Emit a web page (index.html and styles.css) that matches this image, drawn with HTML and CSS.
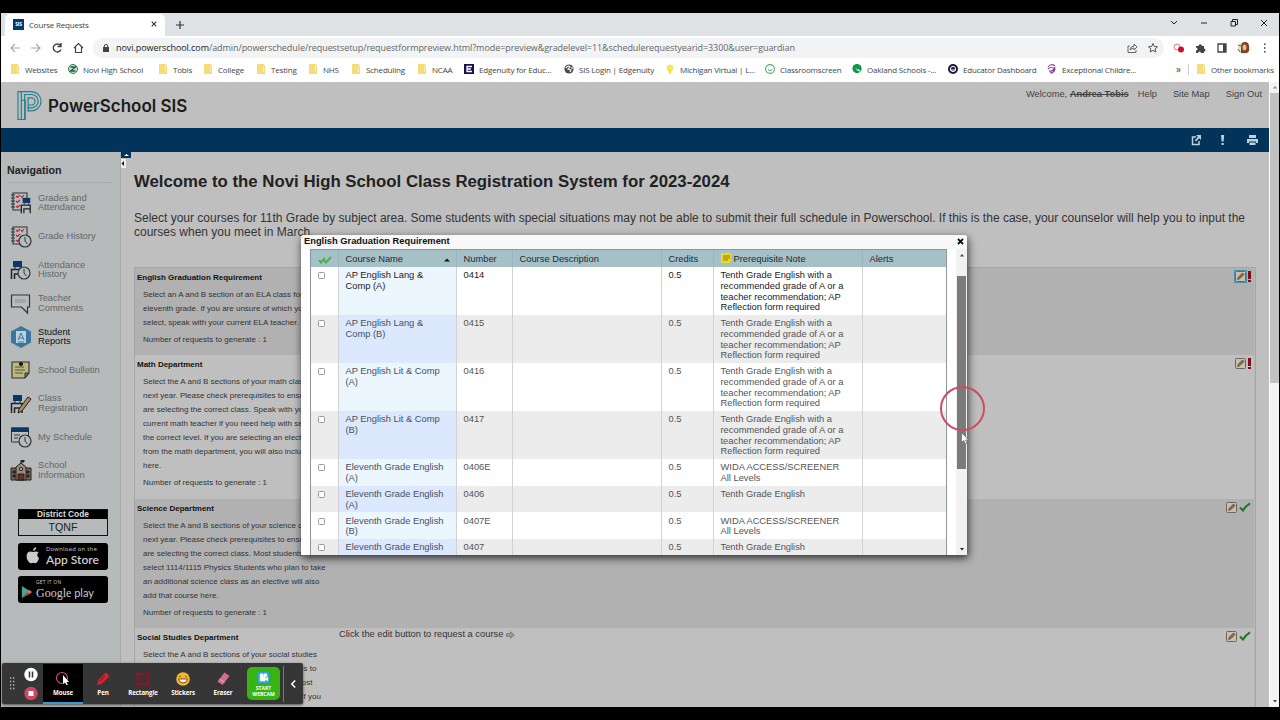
FILE: index.html
```html
<!DOCTYPE html>
<html lang="en">
  <head>
    <meta charset="UTF-8" />
    <meta name="viewport" content="width=device-width, initial-scale=1.0" />
    <title>Course Requests</title>
    <link rel="stylesheet" href="styles.css">
  </head>
  <body>
    <svg class="defs" width="0" height="0">
      <symbol id="folder" viewBox="0 0 10 10">
        <path d="M1 0h7v1l1 1v8H1z" fill="#f6dc78" />
        <path d="M7.5 2v6" stroke="#fcedb0" />
      </symbol>
      <symbol id="edit" viewBox="0 0 11 11">
        <rect x=".5" y=".5" width="10" height="10" rx="1" fill="#c9bfae" stroke="#6e675e" />
        <path d="M2.5 8.5l1-2.5 4-4 1.5 1.5-4 4z" fill="#8a7040" stroke="#4e4433" stroke-width=".7" />
      </symbol>
      <symbol id="check" viewBox="0 0 12 10">
        <path d="M1 5.5l3 3Q6.500 4 11 1.300" fill="none" stroke="#1d7a24" stroke-width="2.100" />
      </symbol>
      <symbol id="clock" viewBox="0 0 14 14">
        <circle cx="7" cy="7" r="6" fill="#b8bcbe" stroke="#333" stroke-width="1.200" />
        <path d="M7 3v4l2.500 3" fill="none" stroke="#333" />
      </symbol>
      <symbol id="notebook" viewBox="0 0 20 20">
        <path d="M3 1h14v17H3z" fill="#b8bcbe" stroke="#333" stroke-width="1.100" />
        <path d="M1 3h4M1 6h4M1 9h4M1 12h4M1 15h4" stroke="#333" />
        <path d="M6 4l1.500 1.500L10 3M6 9l1.500 1.500L10 8M6 14l1.500 1.500L10 13M11 4l1 1.500L14 3" fill="none" stroke="#b3263a" stroke-width="1.100" />
      </symbol>
      <symbol id="chair" viewBox="0 0 14 20">
        <path d="M3 1h9v6H3z" fill="#0b3768" />
        <path d="M5 6v3M10 6v3" stroke="#0b3768" />
        <path d="M1.500 19V9.500H12V19M4.500 19v-5h7" fill="none" stroke="#222" stroke-width="1.500" />
      </symbol>
    </svg>

    <div class="browser">
      <div class="tabs">
        <div class="tab">
          <span class="tab-icon">SIS</span>
          <span class="tab-title">Course Requests</span>
          <svg class="tab-close" viewBox="0 0 6 6"><path d="M.7.7l4.600 4.600M5.300.7L.7 5.300" stroke="#333" stroke-width="1.100" /></svg>
        </div>
        <svg class="new-tab" viewBox="0 0 8 8"><path d="M4 0v8M0 4h8" stroke="#333" stroke-width="1.200" /></svg>
        <svg class="window-buttons" viewBox="0 0 98 10" fill="none" stroke="#222">
          <path d="M1 3L4 6 7 3M31 5h6" />
          <path d="M61 3.500h4.500v4.500H61zM62.500 3V1.500h5v5H66" />
          <path d="M91 2l6 6M97 2l-6 6" />
        </svg>
      </div>

      <div class="toolbar">
        <svg class="nav-buttons" viewBox="0 0 76 12" fill="none" stroke-width="1.200">
          <path d="M10 6H1M5 2L1 6l4 4M21 6h9M26 2l4 4-4 4" stroke="#aaa" />
          <path d="M50.500 3.500A4 4 0 1 0 51 7.500M51 1v3.500h-3.500" stroke="#444" stroke-width="1.400" />
          <path d="M64 6l4.500-4.500L73 6M65.500 5v5.500h6V5" stroke="#444" />
        </svg>
        <div class="address">
          <svg class="lock" viewBox="0 0 6 8"><path d="M0 3h6v5H0z" fill="#444" /><path d="M1.300 3.500V2a1.700 1.500 0 0 1 3.400 0v1.500" fill="none" stroke="#444" /></svg>
          <span class="url"><b>novi.powerschool.com</b>/admin/powerschedule/requestsetup/requestformpreview.html?mode=preview&amp;gradelevel=11&amp;schedulerequestyearid=3300&amp;user=guardian</span>
          <svg class="address-icons" viewBox="0 0 34 12" fill="none" stroke="#555">
            <path d="M3.500 4H2v6.500h8V8M4 8q.5-4 4-4V2l3 3-3 3V6Q6 6 4 8z" stroke-width=".9" />
            <path d="M27 1.500l1.300 3 3.200.3-2.400 2.100.7 3.100L27 8.400 24.200 10l.7-3.100-2.400-2.100 3.200-.3z" />
          </svg>
        </div>
        <svg class="extensions" viewBox="0 0 100 14">
          <circle cx="10" cy="6" r="3" fill="none" stroke="#e07a8a" />
          <circle cx="14" cy="8.500" r="3" fill="#c8102e" />
          <path d="M29 5h2.500a1.700 1.700 0 1 1 3.400 0H37v2.500a1.500 1.500 0 1 1 0 3V12h-3a1.500 1.500 0 0 0-3 0h-2V9.500a1.500 1.500 0 0 0 0-3z" fill="#444" />
          <path d="M51 3h8v8h-8z" fill="none" stroke="#444" stroke-width="1.300" /><path d="M56 3h3v8h-3z" fill="#444" />
          <circle cx="77" cy="7" r="6" fill="#e4dccb" />
          <path d="M74 12V6q0-5 4-5t4 5v4l-2 2z" fill="#7a4322" /><ellipse cx="77.500" cy="6.500" rx="2" ry="3" fill="#eab893" />
          <path d="M71 4l3 1M71 8l2 3" stroke="#4a7a3a" />
          <path d="M97 2.500h1.500V4H97zM97 6.200h1.500v1.500H97zM97 10h1.500v1.500H97z" fill="#444" />
        </svg>
      </div>

      <div class="bookmarks">
        <a><svg><use href="#folder" /></svg>Websites</a>
        <a><svg viewBox="0 0 10 10"><circle cx="5" cy="5" r="4.500" fill="#cfe3d8" stroke="#2d7a55" /><path d="M2.500 3h5l-5 4h5" fill="none" stroke="#1c5c40" stroke-width="1.300" /></svg>Novi High School</a>
        <a><svg><use href="#folder" /></svg>Tobis</a>
        <a><svg><use href="#folder" /></svg>College</a>
        <a><svg><use href="#folder" /></svg>Testing</a>
        <a><svg><use href="#folder" /></svg>NHS</a>
        <a><svg><use href="#folder" /></svg>Scheduling</a>
        <a><svg><use href="#folder" /></svg>NCAA</a>
        <a><svg viewBox="0 0 10 10"><path d="M0 0h10v10H0z" fill="#17124f" /><path d="M8 2.500H3v5h5M3 5h4" fill="none" stroke="#fff" stroke-width="1.300" /></svg>Edgenuity for Educ...</a>
        <a><svg viewBox="0 0 10 10"><circle cx="5" cy="5" r="4.600" fill="#4a4d50" /><path d="M2 4q1-2 3-2l1 1-2 2 3 1-1 2M8 3v2" fill="none" stroke="#fff" stroke-width="1.100" /></svg>SIS Login | Edgenuity</a>
        <a><svg viewBox="0 0 10 10"><circle cx="5" cy="4" r="3.300" fill="#f5ea4c" /><path d="M3.700 6h2.600v3.500H3.700z" fill="#eed94a" /></svg>Michigan Virtual | L...</a>
        <a><svg viewBox="0 0 10 10"><circle cx="5" cy="5" r="4.400" fill="none" stroke="#44b36b" stroke-width="1.100" /><path d="M3 5.500q2 2.500 4.500 0" fill="none" stroke="#44b36b" /></svg>Classroomscreen</a>
        <a><svg viewBox="0 0 10 10"><circle cx="5" cy="4.600" r="4.600" fill="#139446" /><path d="M4 4.500q1 3 4 2M6 5l3 4" fill="none" stroke="#d6f5e0" /></svg>Oakland Schools -...</a>
        <a><svg viewBox="0 0 10 10"><circle cx="5" cy="5" r="5" fill="#1a1b3d" /><circle cx="5" cy="5" r="2.600" fill="none" stroke="#fff" /><path d="M2 6h6" stroke="#fff" /></svg>Educator Dashboard</a>
        <a><svg viewBox="0 0 10 10"><path d="M1 3q3-4 7-1M1 5q3-3 7 0-1 4-5 4M2 7q4 1 6-4" fill="none" stroke="#81439c" stroke-width="1.200" /></svg>Exceptional Childre...</a>
        <span class="more">»</span>
        <a class="other"><svg><use href="#folder" /></svg>Other bookmarks</a>
      </div>

      <div class="viewport">
        <div class="page">
          <div class="header">
            <svg class="logo" viewBox="0 0 26 32" fill="none" stroke="#1f8290" stroke-width="1.200">
              <path d="M1 1h3.500v29H1zM4.500 10h4v20h-4z" />
              <path d="M4.500 1H15a10 10 0 0 1 0 20h-3.500v-3H15a7 7 0 0 0 0-14H8v26" />
              <path d="M11.500 18V7.500H15a3.500 3.500 0 0 1 0 7.500h-3.500" />
            </svg>
            <span class="brand">PowerSchool SIS</span>
            <div class="links">
              <span class="welcome">Welcome, <b>Andrea Tobis</b></span>
              <a>Help</a>
              <a>Site Map</a>
              <a>Sign Out</a>
            </div>
          </div>

          <div class="navbar">
            <svg viewBox="0 0 70 12">
              <path d="M5 3H1.500v7.500H8V7" fill="none" stroke="#bcd2dd" stroke-width="1.500" />
              <path d="M5 1h5v5L8.300 4.300 5 7.500 3.800 6.200 7 3z" fill="#bcd2dd" />
              <path d="M30 1h3.200l-.6 6.500h-2zM30.500 9h2.200v2h-2.200z" fill="#bcd2dd" />
              <path d="M58 1h7v3h-7zM56 5h11v4h-2V7.500h-7V9h-2zM58.500 8.500h6V11h-6z" fill="#bcd2dd" />
            </svg>
          </div>

          <div class="content">
            <div class="sidebar">
              <h2>Navigation</h2>
              <ul>
                <li><svg viewBox="0 0 22 22"><use href="#notebook" width="20" height="20" /><path d="M12 8h10v14H12z" fill="#b8bcbe" /><use href="#chair" x="10" y="5" width="12" height="17" /></svg><span>Grades and<br>Attendance</span></li>
                <li><svg viewBox="0 0 22 22"><use href="#notebook" width="20" height="20" /><use href="#clock" x="8" y="8" width="14" height="14" /></svg><span>Grade History</span></li>
                <li><svg viewBox="0 0 22 22"><use href="#chair" x="0" y="1" width="14" height="20" /><use href="#clock" x="7" y="7" width="14" height="14" /></svg><span>Attendance<br>History</span></li>
                <li><svg viewBox="0 0 22 22"><path d="M1.500 2h18v12h-2v6l-6-6h-10z" fill="#b8bcbe" stroke="#333" stroke-width="1.200" /><path d="M5 6h11v4H5z" fill="#a3a6a8" /></svg><span>Teacher<br>Comments</span></li>
                <li class="active"><svg viewBox="0 0 22 22"><path d="M11 0l10 5.500v11L11 22 1 16.500v-11z" fill="#3c769c" /><path d="M6 5h10v12H6z" fill="#bcd0dc" /><path d="M8 14l3-7 3 7M9 12h4M8 16h6" fill="none" stroke="#3c769c" /></svg><span>Student<br>Reports</span></li>
                <li><svg viewBox="0 0 22 22"><path d="M2 3h17v11l-4 5H2z" fill="#bdb878" stroke="#333" stroke-width="1.100" /><path d="M15 19v-5h4z" fill="#777" stroke="#333" /><path d="M5 8h9M5 11h10M5 14h8" stroke="#555" /><circle cx="11" cy="5" r="2" fill="#111" /></svg><span>School Bulletin</span></li>
                <li><svg viewBox="0 0 22 22"><use href="#chair" x="0" y="1" width="14" height="20" /><path d="M18 4l3 2-9 12-4 2 1-4z" fill="#a58d5d" stroke="#222" /></svg><span>Class<br>Registration</span></li>
                <li><svg viewBox="0 0 22 22"><path d="M1.500 2h17v14h-17z" fill="#b8bcbe" stroke="#333" /><path d="M1 1.500h18V6H1z" fill="#0b3768" /><path d="M4 9h6M4 12h4" stroke="#333" /><use href="#clock" x="8" y="8" width="14" height="14" /></svg><span>My Schedule</span></li>
                <li><svg viewBox="0 0 22 22"><path d="M1 8h20v12H1z" fill="#7c6456" stroke="#222" /><path d="M6 7l5-4 5 4v13H6z" fill="#96897f" stroke="#222" /><path d="M11 4V0h3v2h-3M3 11h2v2H3zM3 15h2v2H3zM17 11h2v2h-2zM17 15h2v2h-2z" fill="#222" stroke="#222" /><circle cx="11" cy="9" r="1.600" fill="#b8bcbe" stroke="#222" /><path d="M8 14h6v6H8z" fill="#6b2f1c" stroke="#222" /></svg><span>School<br>Information</span></li>
              </ul>
              <div class="district">
                <b>District Code</b>
                <span>TQNF</span>
              </div>
              <div class="store">
                <svg viewBox="0 0 14 18"><path d="M7.500 5q3-1.500 5 .7-2.800 2.300.5 5.500-1.500 5-4 5-2-1-3.500 0Q3 16.500 1 12-.5 5.500 4 4.500q1.500 0 3.500.5zM7 4q0-3 3-4 .3 3-3 4z" fill="#ccc" /></svg>
                <p><small>Download on the</small><span>App Store</span></p>
              </div>
              <div class="store play">
                <svg viewBox="0 0 14 16"><path d="M1 1l11 7L1 15z" fill="#4aa39b" /><path d="M7 8l2.500-2.500L13 8l-3.500 2.500z" fill="#c9714c" /><path d="M1 15l6-7 2.500 2.500z" fill="#b04a4a" /></svg>
                <p><small>GET IT ON</small><span><i>Google</i> play</span></p>
              </div>
            </div>

            <div class="collapse">
              <svg viewBox="0 0 11 16"><path d="M0 0h10v6H0z" fill="#02335a" /><path d="M3 4l2.500-2L8 4z" fill="#fff" /><path d="M0 7h5v10H0z" fill="#eee" /><path d="M3 9v5L.5 11.500z" fill="#111" /></svg>
            </div>

            <div class="main">
              <h1>Welcome to the Novi High School Class Registration System for 2023-2024</h1>
              <p class="intro">Select your courses for 11th Grade by subject area. Some students with special situations may not be able to submit their full schedule in Powerschool. If this is the case, your counselor will help you to input the<br>courses when you meet in March.</p>

              <div class="groups">
                <div class="group english">
                  <div class="info">
                    <h3>English Graduation Requirement</h3>
                    <p>Select an A and B section of an ELA class for<br>eleventh grade. If you are unsure of which you<br>select, speak with your current ELA teacher.</p>
                    <p>Number of requests to generate : 1</p>
                  </div>
                  <div class="actions"><svg class="edit focus"><use href="#edit" /></svg><i class="alert"></i></div>
                </div>
                <div class="group math">
                  <div class="info">
                    <h3>Math Department</h3>
                    <p>Select the A and B sections of your math class<br>next year. Please check prerequisites to ensure<br>are selecting the correct class. Speak with your<br>current math teacher if you need help with sel<br>the correct level. If you are selecting an elective<br>from the math department, you will also include<br>here.</p>
                    <p>Number of requests to generate : 1</p>
                  </div>
                  <div class="actions"><svg class="edit"><use href="#edit" /></svg><i class="alert"></i></div>
                </div>
                <div class="group science">
                  <div class="info">
                    <h3>Science Department</h3>
                    <p>Select the A and B sections of your science cl<br>next year. Please check prerequisites to ensure<br>are selecting the correct class. Most students<br>select 1114/1115 Physics Students who plan to take<br>an additional science class as an elective will also<br>add that course here.</p>
                    <p>Number of requests to generate : 1</p>
                  </div>
                  <div class="actions"><svg class="edit"><use href="#edit" /></svg><svg class="check"><use href="#check" /></svg></div>
                </div>
                <div class="group social">
                  <div class="info">
                    <h3>Social Studies Department</h3>
                    <p>Select the A and B sections of your social studies<br>class for next year. Please check prerequisites to<br>ensure that you are in the correct courses. Most<br>students select a yearlong US History class. If you</p>
                  </div>
                  <div class="request">Click the edit button to request a course <svg viewBox="0 0 9 8"><path d="M.5 2.500h4V.7L8.300 4 4.500 7.300V5.500h-4z" fill="#999" stroke="#777" stroke-width=".8" /></svg></div>
                  <div class="actions"><svg class="edit"><use href="#edit" /></svg><svg class="check"><use href="#check" /></svg></div>
                </div>
              </div>
            </div>
          </div>
        </div>

        <div class="scrollbar">
          <svg viewBox="0 0 10 11"><path d="M3 6.500L5 4l2 2.500z" fill="#888" /></svg>
          <div class="thumb"></div>
          <svg viewBox="0 0 10 11"><path d="M3 4l2 2.500L7 4z" fill="#444" /></svg>
        </div>
      </div>
    </div>

    <div class="dialog">
      <div class="dialog-title">
        <span>English Graduation Requirement</span>
        <svg viewBox="0 0 7 7"><path d="M1 1l5 5M6 1L1 6" stroke="#111" stroke-width="1.800" /></svg>
      </div>
      <div class="dialog-body">
        <table>
          <colgroup><col class="c1"><col class="c2"><col class="c3"><col class="c4"><col class="c5"><col class="c6"><col class="c7"></colgroup>
          <thead>
            <tr>
              <th class="pick"><svg viewBox="0 0 14 8"><path d="M1 4l2 2.500L7 2M6 4l2 2.500L13 1" fill="none" stroke="#4cb04c" stroke-width="2" /></svg></th>
              <th>Course Name<svg class="sort" viewBox="0 0 6 4"><path d="M0 3.500L3 .5l3 3z" fill="#111" /></svg></th>
              <th>Number</th>
              <th>Course Description</th>
              <th>Credits</th>
              <th><svg class="note" viewBox="0 0 10 10"><path d="M0 0h10v8L8 10H0z" fill="#efd91c" /><path d="M2 3h7M2 5h7M2 7h5" stroke="#8c7a10" /></svg>Prerequisite Note</th>
              <th>Alerts</th>
            </tr>
          </thead>
          <tbody>
            <tr class="first"><td><input type="checkbox"></td><td>AP English Lang &amp;<br>Comp (A)</td><td>0414</td><td></td><td>0.5</td><td>Tenth Grade English with a<br>recommended grade of A or a<br>teacher recommendation; AP<br>Reflection form required</td><td></td></tr>
            <tr><td><input type="checkbox"></td><td>AP English Lang &amp;<br>Comp (B)</td><td>0415</td><td></td><td>0.5</td><td>Tenth Grade English with a<br>recommended grade of A or a<br>teacher recommendation; AP<br>Reflection form required</td><td></td></tr>
            <tr><td><input type="checkbox"></td><td>AP English Lit &amp; Comp<br>(A)</td><td>0416</td><td></td><td>0.5</td><td>Tenth Grade English with a<br>recommended grade of A or a<br>teacher recommendation; AP<br>Reflection form required</td><td></td></tr>
            <tr><td><input type="checkbox"></td><td>AP English Lit &amp; Comp<br>(B)</td><td>0417</td><td></td><td>0.5</td><td>Tenth Grade English with a<br>recommended grade of A or a<br>teacher recommendation; AP<br>Reflection form required</td><td></td></tr>
            <tr><td><input type="checkbox"></td><td>Eleventh Grade English<br>(A)</td><td>0406E</td><td></td><td>0.5</td><td>WIDA ACCESS/SCREENER<br>All Levels</td><td></td></tr>
            <tr><td><input type="checkbox"></td><td>Eleventh Grade English<br>(A)</td><td>0406</td><td></td><td>0.5</td><td>Tenth Grade English</td><td></td></tr>
            <tr><td><input type="checkbox"></td><td>Eleventh Grade English<br>(B)</td><td>0407E</td><td></td><td>0.5</td><td>WIDA ACCESS/SCREENER<br>All Levels</td><td></td></tr>
            <tr><td><input type="checkbox"></td><td>Eleventh Grade English</td><td>0407</td><td></td><td>0.5</td><td>Tenth Grade English</td><td></td></tr>
          </tbody>
        </table>
        <div class="dialog-scroll">
          <svg viewBox="0 0 10 13"><path d="M3 7.500L5 5l2 2.500z" fill="#444" /></svg>
          <div class="dialog-thumb"></div>
          <svg viewBox="0 0 10 13"><path d="M3 6l2 2.500L7 6z" fill="#222" /></svg>
        </div>
      </div>
    </div>

    <div class="click-ring"></div>
    <svg class="cursor" viewBox="0 0 8 13"><path d="M.5.5v10l2.300-2 1.500 3.500 1.600-.7L4.500 8H7.500z" fill="#fff" stroke="#555" stroke-width=".6" /></svg>

    <div class="recorder">
      <svg class="grip" viewBox="0 0 6 13"><path d="M1 1h1.300M4 1h1.300M1 4.500h1.300M4 4.500h1.300M1 8h1.300M4 8h1.300M1 11.500h1.300M4 11.500h1.300" stroke="#bbb" stroke-width="1.300" /></svg>
      <svg class="rec-buttons" viewBox="0 0 14 34">
        <circle cx="7" cy="7.500" r="6.700" fill="#fff" /><path d="M5.500 4.500v6M8.500 4.500v6" stroke="#333" stroke-width="1.500" />
        <circle cx="7" cy="26.500" r="6.700" fill="#c94a60" /><path d="M4.500 24h5v5h-5z" fill="#fff" />
      </svg>
      <div class="tool selected"><svg viewBox="0 0 16 16"><circle cx="7" cy="7" r="5.500" fill="none" stroke="#d9506b" stroke-width="1.200" /><path d="M8 4v9l2-1.700 1.500 3 1.300-.6L11.500 11H14z" fill="#fff" /></svg>Mouse</div>
      <div class="tool"><svg viewBox="0 0 16 16"><path d="M11 1.500l3.500 3.500-7.500 7.500L2 14l1.500-5z" fill="#d9222c" /><path d="M5 10l5-5" stroke="#7d1118" /></svg>Pen</div>
      <div class="tool"><svg viewBox="0 0 16 16"><path d="M3 3h10v10H3z" fill="none" stroke="#8e1522" stroke-width="2" /><path d="M1.500 1.500h3v3h-3zM11.500 1.500h3v3h-3zM1.500 11.500h3v3h-3zM11.500 11.500h3v3h-3z" fill="#8e1522" /></svg>Rectangle</div>
      <div class="tool"><svg viewBox="0 0 16 16"><circle cx="8" cy="8" r="6.800" fill="#f4b72f" /><path d="M4 6l2-1M12 6l-2-1M3.500 8h9q-.5 4-4.500 4t-4.500-4z" fill="#fff" stroke="#8a4a15" /></svg>Stickers</div>
      <div class="tool"><svg viewBox="0 0 16 16"><path d="M9.500 1.500l5 3.500L7.500 14l-5-3.500z" fill="#cf6f98" /><path d="M4.500 8l5 3.500" stroke="#e8a9c2" /></svg>Eraser</div>
      <div class="webcam"><svg viewBox="0 0 14 14"><path d="M1 1h12v12H1z" fill="#2aa7d6" /><path d="M3 6h6v5H3zM9 8l3-2v5L9 9.500z" fill="#fff" /><circle cx="5" cy="4.500" r="2" fill="#fff" /><circle cx="9" cy="4.500" r="2" fill="#fff" /></svg>START<br>WEBCAM</div>
      <svg class="hide" viewBox="0 0 8 10"><path d="M6 1L2 5l4 4" fill="none" stroke="#fff" stroke-width="1.700" /></svg>
    </div>
  </body>
</html>
```
FILE: styles.css
```css
* {
  box-sizing: border-box;
}

body {
  margin: 0;
  width: 1280px;
  height: 720px;
  padding: 13px 1px;
  overflow: hidden;
  background: #000;
  font-family: "Liberation Sans", Arial, sans-serif;
}

h1, h2, h3, p, ul {
  margin: 0;
  padding: 0;
}

svg {
  display: block;
  flex: none;
}

.defs {
  position: absolute;
}

/* browser chrome */
.browser {
  display: flex;
  flex-direction: column;
  height: 694px;
  background: #fff;
  font-family: "Open Sans", sans-serif;
  color: #444;
}

.tabs {
  display: flex;
  align-items: center;
  height: 23px;
  background: #dee2e5;
}

.tab {
  display: flex;
  align-items: center;
  align-self: flex-end;
  width: 160px;
  height: 22px;
  margin-left: 4px;
  padding: 0 8px 2px;
  border-radius: 5px 5px 0 0;
  background: #fff;
  font-size: 8px;
  letter-spacing: -0.2px;
}

.tab-icon {
  width: 11px;
  height: 11px;
  margin-right: 5px;
  background: #063a67;
  color: #fff;
  font-size: 5px;
  font-weight: bold;
  line-height: 11px;
  text-align: center;
}

.tab-title {
  flex: 1;
}

.tab-close {
  width: 6px;
  height: 6px;
}

.new-tab {
  width: 8px;
  height: 8px;
  margin: 1px 0 0 11px;
}

.window-buttons {
  width: 98px;
  height: 10px;
  margin: -4px 11px 0 auto;
}

.toolbar {
  display: flex;
  align-items: center;
  height: 23px;
}

.nav-buttons {
  width: 76px;
  height: 12px;
  margin: 1px 7px 0 9px;
}

.address {
  display: flex;
  align-items: center;
  width: 1071px;
  height: 20px;
  padding-left: 10px;
  border-radius: 10px;
  background: #f1f3f4;
}

.lock {
  width: 6px;
  height: 8px;
}

.url {
  flex: 1;
  margin-left: 7px;
  font-size: 9px;
  letter-spacing: -0.07px;
  color: #666;
  white-space: nowrap;
}

.url b {
  font-weight: normal;
  color: #222;
}

.address-icons {
  width: 34px;
  height: 12px;
  margin-right: 4px;
}

.extensions {
  width: 100px;
  height: 14px;
  margin-left: 3px;
}

.bookmarks {
  display: grid;
  grid-template-columns: 58px 90px 45px 53px 52px 43px 66px 47px 100px 101px 100px 87px 96px 99px 129px 12px 1fr;
  align-items: center;
  height: 23px;
  padding: 0 0 3px 9px;
  font-size: 8px;
  letter-spacing: -0.18px;
  white-space: nowrap;
}

.bookmarks a {
  display: flex;
  align-items: center;
}

.bookmarks svg {
  width: 10px;
  height: 10px;
  margin-right: 5px;
}

.bookmarks .other {
  padding-left: 7px;
  border-left: 1px solid #ccc;
}

.more {
  font-size: 10px;
  line-height: 10px;
}

.viewport {
  display: flex;
  flex: 1;
  min-height: 0;
  font-family: "Liberation Sans", Arial, sans-serif;
}

.page {
  display: flex;
  flex-direction: column;
  width: 1268px;
  background: #bfbfbf;
}

.header {
  display: flex;
  height: 46px;
  padding-left: 16px;
}

.logo {
  width: 25px;
  height: 32px;
  margin-top: 8px;
}

.brand {
  margin-left: 6px;
  font: 600 17px/48px Inter, sans-serif;
  color: #1c1c1c;
}

.links {
  display: flex;
  margin-left: auto;
  padding: 7px 7px 0 0;
  font-size: 9.33px;
  line-height: 11px;
  color: #444;
}

.links a {
  margin-left: 16px;
}

.links .welcome + a {
  margin-left: 9px;
}

.welcome b {
  text-decoration: line-through;
}

.navbar {
  display: flex;
  justify-content: flex-end;
  align-items: center;
  height: 24px;
  padding-right: 8px;
  background: #02335a;
}

.navbar svg {
  width: 70px;
  height: 12px;
}

.content {
  display: flex;
  flex: 1;
  min-height: 0;
  overflow: hidden;
}

/* sidebar */
.sidebar {
  width: 120px;
  padding: 12px 6px 0;
  background: #b6babb;
  border-right: 1px solid #aaa;
}

.sidebar h2 {
  height: 19px;
  margin-right: 3px;
  border-bottom: 1px solid #a7aaab;
  font-size: 10.67px;
  line-height: 13px;
  color: #222;
}

.sidebar ul {
  list-style: none;
  margin-top: 3px;
}

.sidebar li {
  display: flex;
  align-items: center;
  height: 33.400px;
  padding-top: 1.500px;
  font-size: 9.33px;
  line-height: 9.33px;
  color: #666;
}

.sidebar li svg {
  width: 22px;
  height: 22px;
  margin: 0 6px 0 3px;
}

.sidebar li.active {
  color: #111;
}

.district {
  width: 90px;
  height: 27px;
  margin: 22px 0 7px 11px;
  border: 1px solid #111;
  text-align: center;
  color: #222;
}

.district b {
  display: block;
  background: #000;
  color: #ddd;
  font-size: 8.33px;
  line-height: 9px;
}

.district span {
  display: block;
  font-size: 10.67px;
  line-height: 16px;
}

.store {
  display: flex;
  align-items: center;
  width: 90px;
  height: 27px;
  margin: 6px 0 0 11px;
  padding-left: 8px;
  border-radius: 3px;
  background: #000;
  color: #ccc;
  white-space: nowrap;
}

.store svg {
  width: 14px;
  height: 18px;
  margin-right: 6px;
}

.store small,
.store span {
  display: block;
  font: 6px/7px "Open Sans", sans-serif;
}

.store small {
  letter-spacing: 0.2px;
}

.store span {
  font: 600 12px/13px Lato, sans-serif;
}

.play {
  padding-left: 3px;
}

.play svg {
  width: 12px;
  height: 14px;
  margin: 6px 3px 0 0;
}

.play small {
  font-size: 5px;
}

.play span {
  font-size: 11px;
  font-weight: 400;
}

.play i {
  font-family: "Liberation Serif", serif;
  font-size: 12px;
  font-style: normal;
}

.collapse svg {
  width: 11px;
  height: 16px;
  margin-right: -11px;
}

/* course requests */
.main {
  flex: 1;
  padding: 20px 13px 0 13px;
}

.main h1 {
  font-size: 16.800px;
  line-height: 20px;
  color: #222;
  white-space: nowrap;
}

.intro {
  margin-top: 19px;
  font-size: 12px;
  line-height: 14px;
  color: #333;
  white-space: nowrap;
}

.groups {
  margin-top: 28px;
  border: 1px solid #a5a5a5;
  border-width: 1px 1px 0;
}

.group {
  display: flex;
  padding: 3px 2px 0;
  border-right: 1px solid #b8b8b8;
}

.english {
  height: 87px;
  background: #b1b1b1;
}

.math {
  height: 144px;
}

.science {
  height: 129px;
  background: #b1b1b1;
}

.social {
  height: 140px;
}

.info {
  width: 202px;
  font-size: 8px;
  color: #333;
  white-space: nowrap;
}

.info h3 {
  font-size: 8px;
  line-height: 13px;
  color: #111;
}

.info p {
  margin: 3.500px 0 0 6px;
  line-height: 14px;
}

.request {
  display: flex;
  gap: 3px;
  height: 9px;
  font-size: 9.33px;
  line-height: 7px;
  color: #333;
}

.request svg {
  width: 9px;
  height: 8px;
}

.actions {
  display: flex;
  gap: 2px;
  margin-left: auto;
}

.edit {
  width: 11px;
  height: 11px;
}

.edit.focus {
  outline: 1px solid #4a8da8;
}

.alert {
  width: 3px;
  height: 11px;
  margin-right: 1px;
  background: linear-gradient(#7d0e1a 8px, transparent 8px, transparent 9px, #7d0e1a 9px);
}

.check {
  width: 12px;
  height: 10px;
  margin: 0 1px 0 0;
}

.scrollbar {
  display: flex;
  flex-direction: column;
  width: 10px;
  border-left: 1px solid #fff;
  background: #f3f3f3;
}

.scrollbar svg {
  width: 10px;
  height: 11px;
}

.scrollbar svg:last-child {
  margin-top: auto;
}

.thumb {
  height: 290px;
  background: #c1c1c1;
}

/* course picker dialog */
.dialog {
  position: absolute;
  left: 301px;
  top: 235px;
  width: 666px;
  height: 320px;
  overflow: hidden;
  border-radius: 3px 3px 0 0;
  background: #fff;
  box-shadow: 1px 3px 9px rgba(0, 0, 0, 0.75);
}

.dialog-title {
  display: flex;
  justify-content: space-between;
  height: 14px;
  padding: 0 3px;
  background: #f8f8f8;
  font-size: 9.33px;
  font-weight: bold;
  line-height: 13px;
  color: #111;
}

.dialog-title svg {
  width: 7px;
  height: 7px;
  margin-top: 3px;
}

.dialog-body {
  display: flex;
  justify-content: space-between;
  height: 306px;
  padding-left: 9px;
  overflow: hidden;
}

table {
  width: 637px;
  align-self: flex-start;
  table-layout: fixed;
  border-spacing: 0;
  border: 1px solid #8b979b;
  font-size: 9.33px;
  line-height: 10.670px;
  color: #555;
}

.c1 { width: 27px; }
.c2 { width: 118px; }
.c3 { width: 56px; }
.c4 { width: 149px; }
.c5 { width: 52px; }
.c6 { width: 149px; }

th {
  height: 17px;
  padding: 2px 6.500px 0;
  background: #a6c0c7;
  border-left: 1px solid #9bb5bc;
  font-weight: normal;
  text-align: left;
  color: #1c2c35;
  white-space: nowrap;
}

td {
  height: 26.670px;
  padding: 3.330px 6.500px 2px;
  border-left: 1px solid #d2d2d2;
  vertical-align: top;
  white-space: nowrap;
}

th:first-child,
td:first-child {
  border-left: 0;
}

th.pick svg {
  width: 14px;
  height: 8px;
}

.sort {
  float: right;
  width: 6px;
  height: 4px;
  margin: 4px 0 0;
}

.note {
  float: left;
  width: 10px;
  height: 10px;
  margin: -1px 3px 0 0;
}

tbody tr:nth-child(even) {
  background: #ececec;
}

td:nth-child(2) {
  background: #ecf6fe;
  color: #46525f;
}

tr:nth-child(even) td:nth-child(2) {
  background: #dbe8fd;
}

tr.first td {
  color: #222;
}

td input {
  display: block;
  appearance: none;
  width: 7px;
  height: 7px;
  margin: 2px 0 0;
  border: 1px solid #999;
  border-radius: 1.500px;
  background: #fff;
}

.dialog-scroll {
  display: flex;
  flex-direction: column;
  align-items: center;
  width: 11px;
  background: #f1f1f1;
}

.dialog-scroll svg {
  width: 10px;
  height: 13px;
}

.dialog-scroll svg:last-child {
  margin-top: auto;
}

.dialog-thumb {
  width: 9px;
  height: 193px;
  margin-top: 14px;
  background: #7b7b7b;
}

.click-ring {
  position: absolute;
  left: 940px;
  top: 386px;
  width: 45px;
  height: 45px;
  border: 2px solid #cf4a63;
  border-radius: 50%;
}

.cursor {
  position: absolute;
  left: 961px;
  top: 432px;
  width: 8px;
  height: 13px;
}

/* screen recorder toolbar */
.recorder {
  position: absolute;
  left: 2px;
  top: 663px;
  display: flex;
  align-items: center;
  width: 301px;
  height: 41px;
  border-radius: 2px;
  background: #363636;
  box-shadow: 0 1px 3px rgba(0, 0, 0, 0.6);
  color: #fff;
}

.grip {
  width: 6px;
  height: 13px;
  margin-left: 7px;
}

.rec-buttons {
  width: 14px;
  height: 34px;
  margin: 0 5px 0 9px;
}

.tool {
  display: flex;
  flex-direction: column;
  align-items: center;
  width: 40px;
  height: 40px;
  padding-top: 7px;
  border-bottom: 2px solid transparent;
  font: bold 6.200px/8px "Open Sans", sans-serif;
  letter-spacing: -0.1px;
}

.tool svg {
  width: 16px;
  height: 16px;
  margin-bottom: 2px;
}

.tool.selected {
  background: #000;
  border-color: #3c97cf;
}

.webcam {
  display: flex;
  flex-direction: column;
  align-items: center;
  width: 33px;
  height: 33px;
  margin-left: 4px;
  padding-top: 4px;
  border-radius: 5px;
  background: #35b413;
  font: bold 5px/5.500px "Open Sans", sans-serif;
  text-align: center;
}

.webcam svg {
  width: 13px;
  height: 13px;
  margin-bottom: 2px;
}

.hide {
  width: 14px;
  height: 36px;
  margin-left: 3px;
  padding: 13px 0 13px 6px;
  border-left: 1px solid #777;
}
```
